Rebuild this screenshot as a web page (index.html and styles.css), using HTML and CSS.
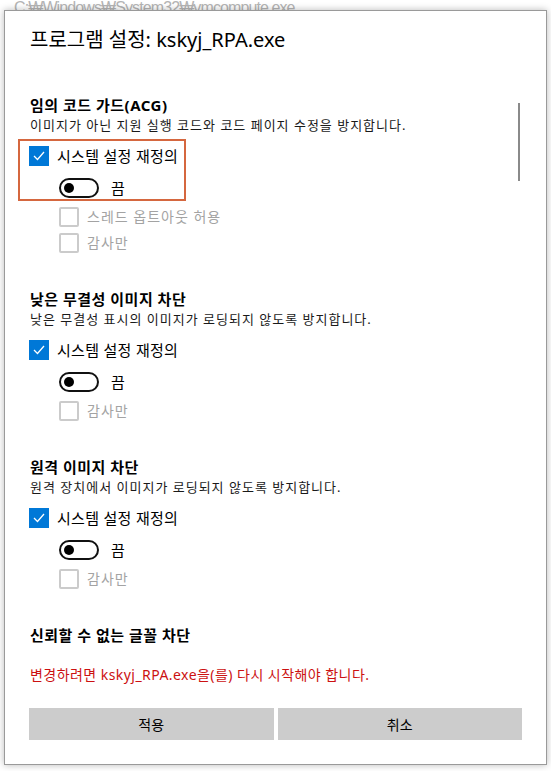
FILE: index.html
```html
<html lang="ko">
<head>
    <meta charset="UTF-8">
    <meta name="viewport" content="width=device-width, initial-scale=1.0">
    <title>프로그램 설정</title>
    <link rel="stylesheet" href="styles.css">
</head>
<body>
    <div class="bg-path">C:₩Windows₩System32₩vmcompute.exe</div>
    <div class="dialog">
        <h1 class="dlg-title">프로그램 설정: kskyj_RPA.exe</h1>
        <div class="scroll">
            <div class="thumb"></div>

            <section class="opt">
                <h2 class="opt-title">임의 코드 가드(ACG)</h2>
                <p class="opt-desc">이미지가 아닌 지원 실행 코드와 코드 페이지 수정을 방지합니다.</p>
                <div class="override hl">
                    <div class="check-row">
                        <span class="cb on"><svg width="20" height="20" viewBox="0 0 20 20"><polyline points="5,10 8.5,13.5 15,6" fill="none" stroke="#fff" stroke-width="1.3"/></svg></span>
                        <span class="cb-label">시스템 설정 재정의</span>
                    </div>
                    <div class="toggle-row">
                        <span class="toggle"><span class="knob"></span></span>
                        <span class="toggle-label">끔</span>
                    </div>
                </div>
                <div class="sub-row"><span class="cb off"></span><span class="sub-label">스레드 옵트아웃 허용</span></div>
                <div class="sub-row"><span class="cb off"></span><span class="sub-label">감사만</span></div>
            </section>

            <section class="opt">
                <h2 class="opt-title">낮은 무결성 이미지 차단</h2>
                <p class="opt-desc">낮은 무결성 표시의 이미지가 로딩되지 않도록 방지합니다.</p>
                <div class="override">
                    <div class="check-row">
                        <span class="cb on"><svg width="20" height="20" viewBox="0 0 20 20"><polyline points="5,10 8.5,13.5 15,6" fill="none" stroke="#fff" stroke-width="1.3"/></svg></span>
                        <span class="cb-label">시스템 설정 재정의</span>
                    </div>
                    <div class="toggle-row">
                        <span class="toggle"><span class="knob"></span></span>
                        <span class="toggle-label">끔</span>
                    </div>
                </div>
                <div class="sub-row"><span class="cb off"></span><span class="sub-label">감사만</span></div>
            </section>

            <section class="opt">
                <h2 class="opt-title">원격 이미지 차단</h2>
                <p class="opt-desc">원격 장치에서 이미지가 로딩되지 않도록 방지합니다.</p>
                <div class="override">
                    <div class="check-row">
                        <span class="cb on"><svg width="20" height="20" viewBox="0 0 20 20"><polyline points="5,10 8.5,13.5 15,6" fill="none" stroke="#fff" stroke-width="1.3"/></svg></span>
                        <span class="cb-label">시스템 설정 재정의</span>
                    </div>
                    <div class="toggle-row">
                        <span class="toggle"><span class="knob"></span></span>
                        <span class="toggle-label">끔</span>
                    </div>
                </div>
                <div class="sub-row"><span class="cb off"></span><span class="sub-label">감사만</span></div>
            </section>

            <section class="opt">
                <h2 class="opt-title">신뢰할 수 없는 글꼴 차단</h2>
            </section>
        </div>
        <p class="restart">변경하려면 kskyj_RPA.exe을(를) 다시 시작해야 합니다.</p>
        <div class="buttons">
            <button class="btn">적용</button>
            <button class="btn">취소</button>
        </div>
    </div>
</body>
</html>
```

FILE: styles.css
```css
body { margin: 0; background: #fff; font-family: "Noto Sans", "Noto Sans CJK KR", sans-serif; color: #000; }
.bg-path { height: 10px; overflow: hidden; padding-left: 14px; font-family: "Liberation Sans", "Noto Sans CJK KR", sans-serif; font-size: 16px; line-height: 16px; letter-spacing: -0.9px; color: #b4b4b4; }
.dialog { position: relative; margin-left: 4px; width: 543px; height: 755px; box-sizing: border-box; background: #fff; border: 1px solid #9a9a9a; box-shadow: 0 0 7px rgba(0, 0, 0, 0.28); padding: 15px 25px 0 25px; }
.dlg-title { margin: 0; font-size: 20px; line-height: 28px; font-weight: normal; }
.scroll { margin-top: 41px; }
.thumb { position: absolute; left: 513px; top: 92px; width: 2px; height: 78px; background: #8a8a8a; }
.opt { margin-bottom: 36px; }
.opt:last-child { margin-bottom: 0; }
.opt-title { margin: 0; font-size: 15px; line-height: 20px; font-weight: bold; letter-spacing: 0.5px; }
.opt-desc { margin: 1px 0 0 0; font-size: 13px; line-height: 18px; letter-spacing: 1px; color: #1a1a1a; }
.override { margin: 5px 0 0 -12px; width: 168px; box-sizing: border-box; border: 2px solid transparent; padding: 5px 6px 1px 9px; }
.override.hl { border-color: #d5673f; }
.check-row { display: flex; align-items: center; height: 20px; }
.cb { display: inline-block; width: 20px; height: 20px; box-sizing: border-box; flex: none; }
.cb.on { background: #0078d7; }
.cb.on svg { display: block; }
.cb.off { border: 2px solid #cbcbcb; border-radius: 2px; }
.cb-label { margin-left: 8px; font-size: 15px; line-height: 20px; letter-spacing: 0.3px; white-space: nowrap; }
.toggle-row { display: flex; align-items: center; margin-top: 12px; padding-left: 30px; height: 20px; }
.toggle { display: flex; align-items: center; width: 40px; height: 20px; box-sizing: border-box; border: 2px solid #111; border-radius: 10px; padding-left: 3px; }
.knob { width: 10px; height: 10px; border-radius: 50%; background: #000; }
.toggle-label { margin-left: 12px; font-size: 15px; line-height: 20px; }
.sub-row { display: flex; align-items: center; margin-top: 6px; padding-left: 29px; height: 20px; }
.sub-label { margin-left: 8px; font-size: 14px; line-height: 20px; letter-spacing: 1px; color: #a3a3a3; }
.restart { margin: 20px 0 0 0; font-size: 14px; line-height: 20px; letter-spacing: 0.45px; color: #cc1111; }
.buttons { display: flex; gap: 4px; margin-top: 23px; margin-left: -1px; width: 493px; }
.btn { flex: 1; height: 32px; border: none; background: #cccccc; font-family: "Noto Sans", "Noto Sans CJK KR", sans-serif; font-size: 14px; color: #000; padding: 0; }
```
